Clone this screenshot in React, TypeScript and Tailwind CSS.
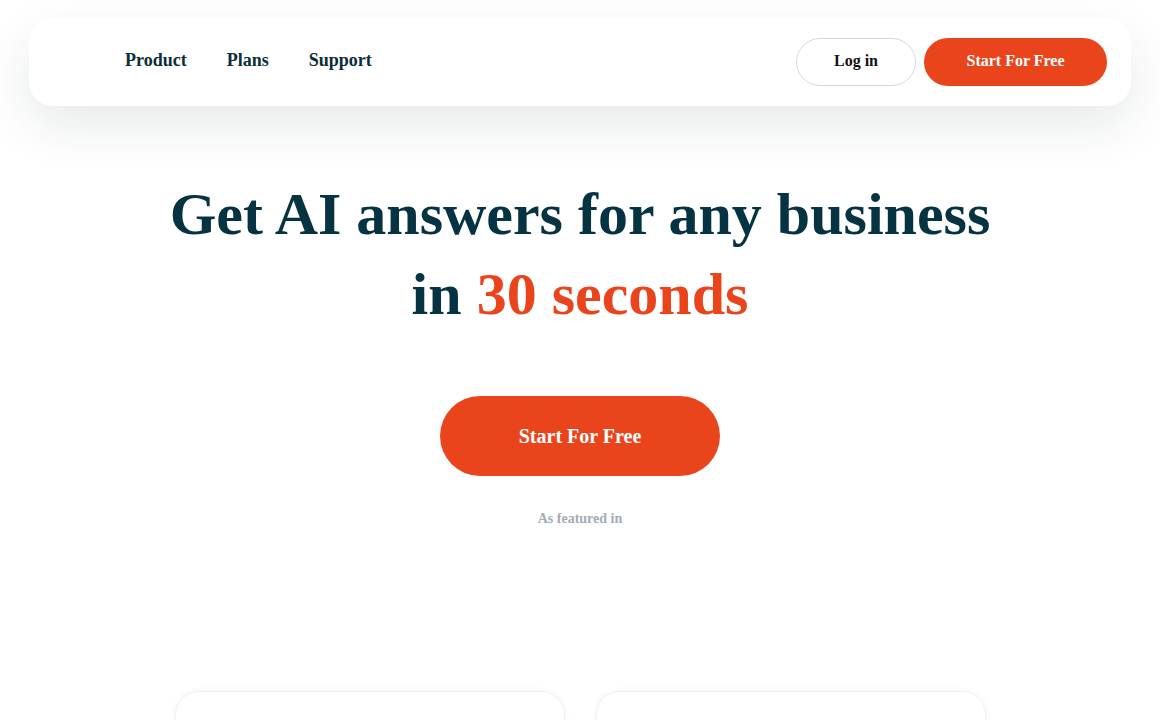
export default function App() {
  const serif = { fontFamily: '"Liberation Serif", "Times New Roman", serif' };

  return (
    <div className="min-h-screen bg-white" style={serif}>
      <header className="px-[29px] pt-[18px]">
        <nav className="flex h-[88px] items-center justify-between rounded-[24px] bg-white pl-[96px] pr-[24px] shadow-[0_20px_50px_rgba(15,40,50,0.10)]">
          <ul className="flex items-center gap-10 pb-[3px] text-[18px] font-bold text-[#0b2e38]">
            <li>Product</li>
            <li>Plans</li>
            <li>Support</li>
          </ul>
          <div className="flex items-center gap-2">
            <button className="h-12 w-[120px] rounded-full border border-[#d4d8dd] bg-white pb-[2px] text-[16px] font-bold text-[#111]">
              Log in
            </button>
            <button className="h-12 w-[183px] rounded-full bg-[#ea441d] pb-[2px] text-[16px] font-bold text-white">
              Start For Free
            </button>
          </div>
        </nav>
      </header>

      <main className="flex flex-col items-center">
        <h1 className="mt-[68px] text-center text-[60px] font-bold leading-[80px] text-[#053341]">
          Get AI answers for any business
          <br />
          in <span className="text-[#ea441d]">30 seconds</span>
        </h1>

        <button className="mt-[62px] h-20 w-[280px] rounded-full bg-[#ea441d] text-[20px] font-bold text-white">
          Start For Free
        </button>

        <p className="mt-[32px] text-[14px] font-bold text-[#a3abb5]">As featured in</p>

        <div className="mt-[162px] flex gap-[31px]">
          <div className="h-[200px] w-[390px] rounded-[24px] border border-[#f1f1f1] bg-white shadow-[0_0_6px_rgba(0,0,0,0.06)]" />
          <div className="h-[200px] w-[390px] rounded-[24px] border border-[#f1f1f1] bg-white shadow-[0_0_6px_rgba(0,0,0,0.06)]" />
        </div>
      </main>
    </div>
  );
}
